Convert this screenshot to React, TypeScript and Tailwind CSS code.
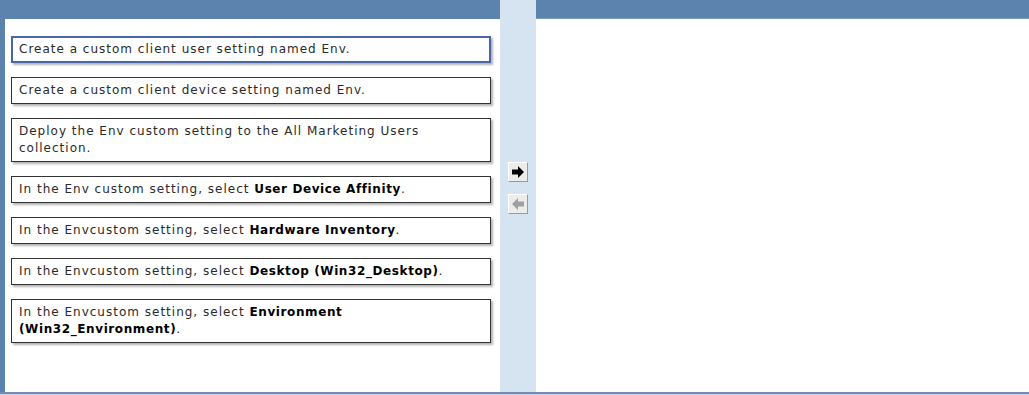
import React from "react";

type Item = { id: number; parts: { text: string; bold?: boolean }[]; selected?: boolean };

const items: Item[] = [
  { id: 1, parts: [{ text: "Create a custom client user setting named Env." }], selected: true },
  { id: 2, parts: [{ text: "Create a custom client device setting named Env." }] },
  { id: 3, parts: [{ text: "Deploy the Env custom setting to the All Marketing Users collection." }] },
  { id: 4, parts: [{ text: "In the Env custom setting, select " }, { text: "User Device Affinity", bold: true }, { text: "." }] },
  { id: 5, parts: [{ text: "In the Envcustom setting, select " }, { text: "Hardware Inventory", bold: true }, { text: "." }] },
  { id: 6, parts: [{ text: "In the Envcustom setting, select " }, { text: "Desktop (Win32_Desktop)", bold: true }, { text: "." }] },
  { id: 7, parts: [{ text: "In the Envcustom setting, select " }, { text: "Environment (Win32_Environment)", bold: true }, { text: "." }] },
];

const ArrowButton = ({ dir, disabled }: { dir: "right" | "left"; disabled?: boolean }) => (
  <div className="w-[20px] h-[20px] bg-[#ececec] border border-t-white border-l-white border-r-[#9a9a9a] border-b-[#9a9a9a] flex items-center justify-center">
    <svg width="14" height="14" viewBox="0 0 14 14">
      {dir === "right" ? (
        <path d="M1 4.5 H7 V1 L13 7 L7 13 V9.5 H1 Z" fill={disabled ? "#a0a0a0" : "#000"} />
      ) : (
        <path d="M13 4.5 H7 V1 L1 7 L7 13 V9.5 H13 Z" fill={disabled ? "#a0a0a0" : "#000"} />
      )}
    </svg>
  </div>
);

export default function App() {
  return (
    <div className="w-[1029px] h-[395px] bg-white flex flex-col overflow-hidden" style={{ fontFamily: '"DejaVu Sans", Verdana, sans-serif' }}>
      <div className="flex h-[392px]">
        {/* left list */}
        <div className="w-[500px] flex flex-col">
          <div className="h-[19px] bg-[#5b83ae]" />
          <div className="flex-1 border-l-[5px] border-[#5a82ad] pl-[6px] pr-[4px] pt-[17px] flex flex-col gap-[14px]">
            {items.map((item) => (
              <div
                key={item.id}
                className={
                  item.selected
                    ? "w-[480px] border-2 border-[#4767a8] bg-white px-[6px] pt-[3px] pb-[3px] text-[12px] leading-[17px] tracking-[1px] text-[#2a2a2a] shadow-[2px_2px_2px_rgba(0,0,0,0.3)]"
                    : "w-[480px] border border-[#333] bg-white px-[7px] pt-[4px] pb-[4px] text-[12px] leading-[17px] tracking-[1px] text-[#2a2a2a] shadow-[2px_2px_2px_rgba(0,0,0,0.3)]"
                }
              >
                {item.parts.map((p, i) =>
                  p.bold ? (
                    <b key={i} className="font-bold text-black tracking-[0.6px]">{p.text}</b>
                  ) : (
                    <span key={i}>{p.text}</span>
                  )
                )}
              </div>
            ))}
          </div>
        </div>

        {/* middle column with move buttons */}
        <div className="w-[36px] bg-[#d6e4f2] flex flex-col items-center pt-[162px] gap-[12px]">
          <ArrowButton dir="right" />
          <ArrowButton dir="left" disabled />
        </div>

        {/* right answer area */}
        <div className="flex-1 flex flex-col">
          <div className="h-[19px] bg-[#5b83ae] border-b border-[#7d9cc0]" />
          <div className="flex-1 bg-white" />
        </div>
      </div>
      <div className="h-[2px] bg-[#6f8cb4]" />
      <div className="h-[1px] bg-[#c7d5e6]" />
    </div>
  );
}
